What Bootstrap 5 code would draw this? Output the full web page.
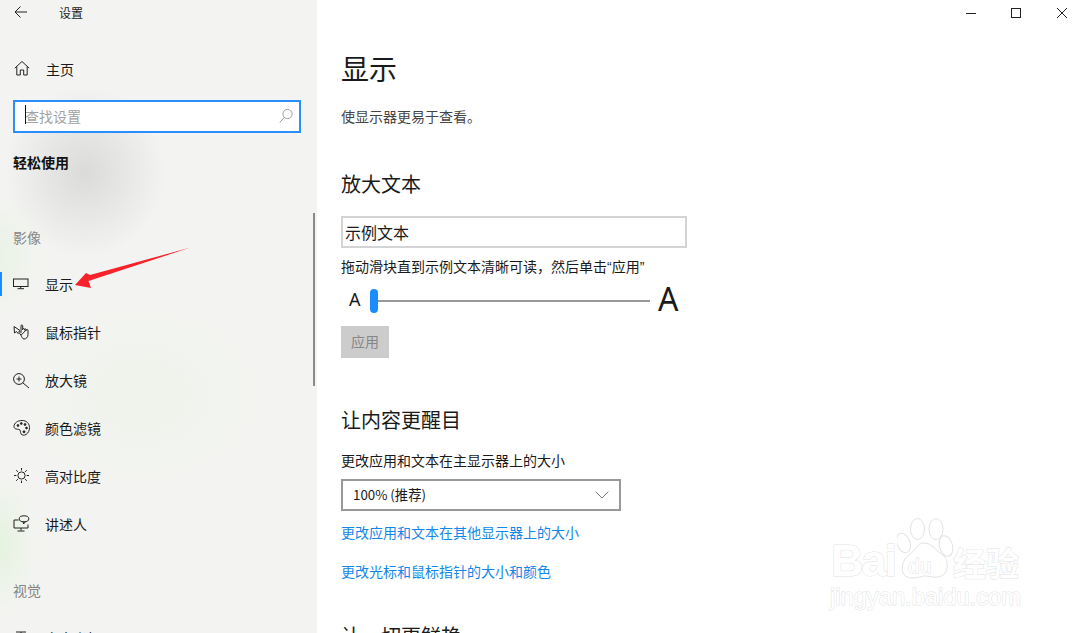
<!DOCTYPE html>
<html lang="zh-CN">
<head>
<meta charset="utf-8">
<title>设置</title>
<link href="https://cdn.jsdelivr.net/npm/bootstrap@5.3.0/dist/css/bootstrap.min.css" rel="stylesheet">
<style>
html,body{height:633px;overflow:hidden;background:#fff}
body{font-family:"Noto Sans CJK SC","Liberation Sans",sans-serif;font-size:14px;color:#1a1a1a;line-height:20px}
.win-shell{width:1082px;height:633px;position:relative;overflow:hidden}
.side-pane{width:317px;height:633px;flex:none;position:relative;overflow:hidden;
 background:
 radial-gradient(ellipse 80px 85px at 85px 172px,rgba(120,120,120,.2),rgba(120,120,120,0)),
 radial-gradient(ellipse 40px 60px at 0 255px,rgba(200,235,185,.22),rgba(200,235,185,0)),
 radial-gradient(ellipse 38px 70px at 0 545px,rgba(200,240,185,.32),rgba(200,240,185,0)),
 radial-gradient(ellipse 120px 90px at 140px 395px,rgba(230,240,222,.35),rgba(230,240,222,0)),
 #f3f4f1}
.title-row{height:26px;padding-left:14px}
.title-row span{margin-left:27px;font-size:12px;color:#222}
.home-row{height:28px;margin-top:29px;padding-left:14px}
.ico{width:18px;height:18px;flex:none;display:block}
.nav-label{margin-left:14px}
.find-box{margin:17px 16px 0 13px;height:33px;border:2px solid #2a8ffa;background:#fff;padding:0 6px 2px 10px;position:relative}
.find-box span{color:#a2a2a2;font-size:14px}
.caret-bar{position:absolute;left:10px;top:3px;width:1px;height:19px;background:#111}
.group-title{margin:19px 0 0 13px;font-weight:700;font-size:14px;line-height:20px;color:#111}
.sec-label{margin:55px 0 0 13px;color:#858585;font-size:14px;line-height:20px}
.sec-label.second{margin-top:32px}
.nav-rows{margin-top:13px}
.nav-row{height:48px;padding-left:13px;position:relative}
.nav-row.on::before{content:"";position:absolute;left:0;top:12px;width:2px;height:24px;background:#1a8cff}
.next-row{height:48px;padding-left:13px;margin-top:14px}
.scroll-thumb{position:absolute;left:313px;top:213px;width:2px;height:173px;background:#8a8a8a}
.main-pane{flex:1;padding:0 0 0 24px;position:relative}
.page-title{font-size:28px;line-height:40px;font-weight:400;margin:48px 0 0;color:#1a1a1a}
.page-sub{margin:18px 0 0;font-size:14px;line-height:20px;color:#444}
.sec-head{font-size:20px;line-height:28px;font-weight:400;margin:0;color:#1a1a1a}
.h-one{margin-top:44px}
.h-two{margin-top:48px}
.h-three{margin-top:41px}
.sample-box{width:346px;height:32px;border:2px solid #d4d4d4;margin-top:18px;padding-left:2px;font-size:16px;line-height:29px;color:#1a1a1a}
.hint-line{margin:8px 0 0;font-size:14px;line-height:20px;color:#1a1a1a}
.hint-line q{quotes:none;font-family:"Liberation Sans",sans-serif}
.size-row{height:28px;margin-top:10px}
.size-small{width:29px;padding:0 0 4px 8px;font-size:18px;font-family:"Noto Sans",sans-serif}
.size-big{font-size:32px;font-family:"Noto Sans",sans-serif;margin-left:8px;line-height:28px;padding-bottom:4px}
.track-wrap{width:280px;height:24px;position:relative}
.track-line{position:absolute;left:0;right:0;top:11px;height:2px;background:#999}
.track-knob{position:absolute;left:0;top:0;width:8px;height:24px;border-radius:4px;background:#1a8cff}
.apply-btn{--bs-btn-disabled-bg:#ccc;--bs-btn-disabled-color:#868686;--bs-btn-disabled-opacity:1;--bs-btn-disabled-border-color:#ccc;width:48px;height:32px;font-size:14px;line-height:20px;border:0;border-radius:0;padding:0 0 2px;margin-top:11px;display:block}
.lbl-line{margin:16px 0 0;font-size:14px;color:#1a1a1a}
.drop-box{width:280px;height:32px;border:2px solid #999;margin-top:9px;padding:0 10px;font-size:13.3px;color:#1a1a1a;background:#fff}
.lnk{display:block;color:#1287e8;text-decoration:none;font-size:14px;line-height:20px}
.lnk-a{margin-top:11px}
.lnk-b{margin-top:19px}
.win-btns{position:absolute;right:0;top:0;height:26px;padding-right:14px;gap:33px}
.red-arrow{position:absolute;left:70px;top:243px;width:125px;height:50px}
.wm-box{position:absolute;left:828px;top:516px;width:210px;height:90px;color:#fff}
.wm-paw{position:absolute;left:69px;top:2px;width:60px;height:62px}
.wm-bai,.wm-du,.wm-cn,.wm-url{position:absolute;font-family:"Liberation Sans",sans-serif;color:#fff;-webkit-text-stroke:1px #e3e3e3;paint-order:stroke fill}
.wm-bai{left:3px;top:23px;font-size:45px;line-height:44px;letter-spacing:-2px;font-weight:700}
.wm-du{left:80px;top:39px;font-size:21px;line-height:22px}
.wm-cn{left:125px;top:26px;font-size:33px;line-height:40px;font-family:"Noto Sans CJK SC",sans-serif;font-weight:700}
.wm-url{left:2px;top:68px;font-size:23.7px;line-height:26px}
</style>
</head>
<body>
<div class="win-shell d-flex">
  <aside class="side-pane">
    <div class="title-row d-flex align-items-center">
      <svg class="ico" viewBox="0 0 18 18" fill="none" stroke="#222" stroke-width="1"><path d="M1 8H13M1 8L6.5 2.5M1 8L6.5 13.5"/></svg>
      <span>设置</span>
    </div>
    <div class="home-row d-flex align-items-center">
      <svg class="ico" viewBox="0 0 18 18" fill="none" stroke="#222" stroke-width="1"><path d="M.8 8.2L8 1.5L15.2 8.2M2.8 6.5V15H6.3V10H9.7V15H13.2V6.5"/></svg>
      <span class="nav-label">主页</span>
    </div>
    <div class="find-box d-flex align-items-center justify-content-between">
      <i class="caret-bar"></i>
      <span>查找设置</span>
      <svg width="14" height="16" viewBox="0 0 14 16" fill="none" stroke="#a0a0a0" stroke-width="1"><circle cx="8.5" cy="6" r="4.6"/><path d="M5.2 9.4L.8 14.4"/></svg>
    </div>
    <div class="group-title">轻松使用</div>
    <div class="sec-label">影像</div>
    <div class="nav-rows">
      <div class="nav-row on d-flex align-items-center">
        <svg class="ico" viewBox="0 0 18 18" fill="none" stroke="#222" stroke-width="1"><rect x=".5" y="4" width="14.5" height="7.5"/><path d="M7.7 11.5V13.5M4.5 13.7H11"/></svg>
        <span class="nav-label">显示</span>
      </div>
      <div class="nav-row d-flex align-items-center">
        <svg class="ico" viewBox="0 0 18 18" fill="none" stroke="#222" stroke-width="1"><path d="M1 3.5L1.5 10L3.5 8.5L5.5 11M1 3.5L7 7.5"/><path d="M8 12.2L5.8 9.2C5.4 8.5 6.3 7.8 7 8.5L8 9.6V2.8C8 1.6 9.7 1.6 9.7 2.8V7M9.7 6.4C9.7 5.2 11.5 5.2 11.5 6.4V7.4M11.5 6.6C11.5 5.6 13.2 5.6 13.2 6.6V7.8M13.2 7C13.2 6.2 15 6.2 15 7.2V11.5C15 14.5 13 16 11 16C9.3 16 8.6 13.3 8 12.2Z"/></svg>
        <span class="nav-label">鼠标指针</span>
      </div>
      <div class="nav-row d-flex align-items-center">
        <svg class="ico" viewBox="0 0 18 18" fill="none" stroke="#222" stroke-width="1"><circle cx="6" cy="8" r="5.4"/><path d="M9.8 11.8L16 17M6 5.5V10.5M3.5 8H8.5"/></svg>
        <span class="nav-label">放大镜</span>
      </div>
      <div class="nav-row d-flex align-items-center">
        <svg class="ico" viewBox="0 0 18 18" fill="none" stroke="#222" stroke-width="1"><path d="M9 1.5C4.5 1.5 1 4 1 7.5C1 10.5 4.5 10 6 10.5C8 11 7 13 8 14.8C9 16.5 11.5 16.5 13 15.5C15.3 14 16.5 11.5 16.5 8.7C16.5 4.5 13.5 1.5 9 1.5Z"/><circle cx="5" cy="6.5" r=".9" fill="#222"/><circle cx="8.3" cy="4.5" r=".9" fill="#222"/><circle cx="12" cy="5.5" r=".9" fill="#222"/><circle cx="13.5" cy="9" r=".9" fill="#222"/><circle cx="11" cy="12.8" r="1" fill="#222"/></svg>
        <span class="nav-label">颜色滤镜</span>
      </div>
      <div class="nav-row d-flex align-items-center">
        <svg class="ico" viewBox="0 0 18 18" fill="none" stroke="#222" stroke-width="1"><circle cx="8.5" cy="8.5" r="3.6"/><path d="M8.5 1V3.4M8.5 13.6V16M1 8.5H3.4M13.6 8.5H16M3.2 3.2L4.9 4.9M12.1 12.1L13.8 13.8M13.8 3.2L12.1 4.9M4.9 12.1L3.2 13.8"/></svg>
        <span class="nav-label">高对比度</span>
      </div>
      <div class="nav-row d-flex align-items-center">
        <svg class="ico" viewBox="0 0 18 18" fill="none" stroke="#222" stroke-width="1"><path d="M5.5 5H1V13H15V9.5M8 13V15.5M4.5 16H11.5"/><ellipse cx="11" cy="3.8" rx="4.8" ry="3"/><path d="M10 6.5L10.6 9L12.5 6.6"/></svg>
        <span class="nav-label">讲述人</span>
      </div>
    </div>
    <div class="sec-label second">视觉</div>
    <div class="next-row d-flex align-items-center">
      <svg class="ico" viewBox="0 0 18 18" fill="none" stroke="#222" stroke-width="1"><path d="M3 3H13M8 3V16"/></svg>
      <span class="nav-label">文本光标</span>
    </div>
    <div class="scroll-thumb"></div>
  </aside>

  <main class="main-pane">
    <h1 class="page-title">显示</h1>
    <p class="page-sub">使显示器更易于查看。</p>
    <h2 class="sec-head h-one">放大文本</h2>
    <div class="sample-box">示例文本</div>
    <p class="hint-line">拖动滑块直到示例文本清晰可读，然后单击<q>“</q>应用<q>”</q></p>
    <div class="size-row d-flex align-items-center">
      <div class="size-small">A</div>
      <div class="track-wrap"><i class="track-line"></i><i class="track-knob"></i></div>
      <div class="size-big">A</div>
    </div>
    <button class="btn apply-btn" type="button" disabled>应用</button>
    <h2 class="sec-head h-two">让内容更醒目</h2>
    <p class="lbl-line">更改应用和文本在主显示器上的大小</p>
    <div class="drop-box d-flex align-items-center justify-content-between">
      <span>100% (推荐)</span>
      <svg width="14" height="8" viewBox="0 0 14 8" fill="none" stroke="#777" stroke-width="1"><path d="M.7 .7L7 7L13.3 .7"/></svg>
    </div>
    <a class="lnk lnk-a" href="#">更改应用和文本在其他显示器上的大小</a>
    <a class="lnk lnk-b" href="#">更改光标和鼠标指针的大小和颜色</a>
    <h2 class="sec-head h-three">让一切更鲜艳</h2>
  </main>

  <div class="win-btns d-flex align-items-center">
    <svg width="12" height="12" viewBox="0 0 12 12" stroke="#222" stroke-width="1"><path d="M0 6.500H10"/></svg>
    <svg width="12" height="12" viewBox="0 0 12 12" fill="none" stroke="#222" stroke-width="1"><rect x=".5" y="1.500" width="9" height="9"/></svg>
    <svg width="12" height="12" viewBox="0 0 12 12" stroke="#222" stroke-width="1"><path d="M1 1L11 11M11 1L1 11"/></svg>
  </div>

  <svg class="red-arrow" viewBox="0 0 125 50"><path d="M120.500 4.500L20 32L16 30L5 42L21 45L18.500 38Z" fill="#f8222a"/></svg>

  <div class="wm-box">
    <div class="wm-bai">Bai</div>
    <svg class="wm-paw" viewBox="0 0 60 62" fill="#fff" stroke="#e3e3e3" stroke-width="1"><ellipse cx="6.500" cy="25" rx="6.500" ry="10" transform="rotate(-20 6.500 25)"/><ellipse cx="20.500" cy="11" rx="7" ry="10.500"/><ellipse cx="39" cy="11" rx="7" ry="10.500"/><ellipse cx="49" cy="28" rx="6.500" ry="10.500" transform="rotate(-15 49 28)"/><path d="M27 25C20 25 18 33 12 37C4 42 1 60 15 60C22 60 24 58 28 58C33 58 37 60 41 59C53 57 52 42 46 37C39 33 35 25 27 25Z"/></svg>
    <div class="wm-du">du</div>
    <div class="wm-cn">经验</div>
    <div class="wm-url">jingyan.baidu.com</div>
  </div>
</div>
</body>
</html>
